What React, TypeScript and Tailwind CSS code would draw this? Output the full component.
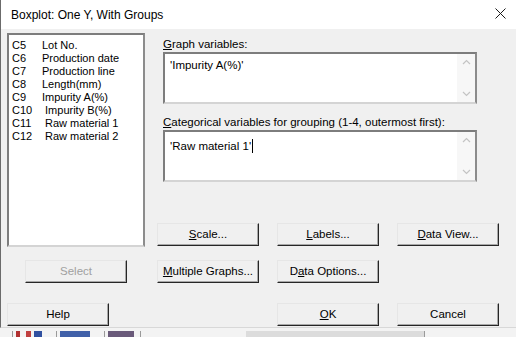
import React from "react";

const columns = [
  ["C5", "Lot No."],
  ["C6", "Production date"],
  ["C7", "Production line"],
  ["C8", "Length(mm)"],
  ["C9", "Impurity A(%)"],
  ["C10", " Impurity B(%)"],
  ["C11", " Raw material 1"],
  ["C12", " Raw material 2"],
];

function Btn({
  children,
  disabled,
  className = "",
}: {
  children: React.ReactNode;
  disabled?: boolean;
  className?: string;
}) {
  return (
    <div
      className={`flex h-[23px] w-[102px] shrink-0 items-center justify-center border border-t-[#e6e6e6] border-l-[#e6e6e6] border-r-[#262626] border-b-[#262626] bg-[#f0f0f0] text-[11.5px] shadow-[inset_-1px_-1px_0_#a8a8a8] ${
        disabled ? "text-[#a0a0a0]" : "text-black"
      } ${className}`}
    >
      {children}
    </div>
  );
}

/** Multi-line edit box with the faint inactive scroll arrows */
function EditBox({ value, caret }: { value: string; caret?: boolean }) {
  return (
    <div className="flex h-[52px] w-[314px] border-2 border-t-[#7d7d7d] border-l-[#7d7d7d] border-r-[#8c8c8c] border-b-[#d4d4d4] bg-white">
      <div className="flex-1 px-[5px] pt-[4px] text-[11.5px] leading-[14px] text-black">
        {value}
        {caret && <span className="ml-[1px] inline-block h-[14px] w-[1px] translate-y-[3px] bg-black" />}
      </div>
      <div className="flex w-[18px] flex-col items-center justify-between bg-[#f7f7f7] py-[5px]">
        <svg width="9" height="6" viewBox="0 0 9 6">
          <path d="M1 5 L4.5 1.5 L8 5" fill="none" stroke="#c4c4c4" strokeWidth="1.2" />
        </svg>
        <svg width="9" height="6" viewBox="0 0 9 6">
          <path d="M1 1 L4.5 4.5 L8 1" fill="none" stroke="#c4c4c4" strokeWidth="1.2" />
        </svg>
      </div>
    </div>
  );
}

export default function App() {
  return (
    <div className="flex h-[337px] w-[516px] flex-col overflow-hidden font-['Liberation_Sans',Arial,sans-serif] text-[11.5px]">
      {/* title bar */}
      <div className="flex h-[29px] shrink-0 items-center justify-between border-l border-[#6b6b6b] bg-white pl-[10px] pr-[10px]">
        <span className="text-[12px] text-black">Boxplot: One Y, With Groups</span>
        <svg width="11" height="11" viewBox="0 0 11 11" className="-mt-[3px]">
          <path d="M0.5 0.5 L10.5 10.5 M10.5 0.5 L0.5 10.5" stroke="#1a1a1a" strokeWidth="1" />
        </svg>
      </div>

      {/* dialog body */}
      <div className="flex h-[299px] shrink-0 flex-col border-l border-b border-[#6b6b6b] border-b-[#d8d8d8] bg-[#f0f0f0] pl-[6px] pt-[4px]">
        <div className="flex h-[214px]">
          <div className="h-[214px] w-[138px] border-2 border-t-[#7d7d7d] border-l-[#7d7d7d] border-r-[#8c8c8c] border-b-[#d4d4d4] bg-white pl-[3px] pt-[4px] text-[11px]">
            {columns.map(([c, name]) => (
              <div key={c} className="flex h-[13px] items-center whitespace-pre leading-[13px] text-black">
                <span className="w-[30px]">{c}</span>
                <span>{name}</span>
              </div>
            ))}
          </div>

          <div className="ml-[12px] flex flex-col">
            <div className="ml-[6px] mt-[3px] h-[16px] leading-[16px] text-black">
              <span className="underline">G</span>raph variables:
            </div>
            <div className="ml-[6px]">
              <EditBox value="'Impurity A(%)'" />
            </div>
            <div className="ml-[6px] mt-[10px] h-[16px] leading-[16px] text-black">
              <span className="underline">C</span>ategorical variables for grouping (1-4, outermost first):
            </div>
            <div className="ml-[6px]">
              <EditBox value="'Raw material 1'" caret />
            </div>
            <div className="mt-[41px] flex gap-[18px]">
              <Btn>
                <span className="underline">S</span>cale...
              </Btn>
              <Btn>
                <span className="underline">L</span>abels...
              </Btn>
              <Btn>
                <span className="underline">D</span>ata View...
              </Btn>
            </div>
          </div>
        </div>

        <div className="mt-[13px] flex">
          <Btn disabled className="ml-[18px]">
            Select
          </Btn>
          <Btn className="ml-[30px]">
            <span className="underline">M</span>ultiple Graphs...
          </Btn>
          <Btn className="ml-[18px]">
            D<span className="underline">a</span>ta Options...
          </Btn>
        </div>

        <div className="mt-[20px] flex">
          <Btn>Help</Btn>
          <Btn className="ml-[168px]">
            <span className="underline">O</span>K
          </Btn>
          <Btn className="ml-[18px]">Cancel</Btn>
        </div>
      </div>

      {/* window behind the dialog */}
      <div className="flex flex-1 items-end bg-[#f3f3f3]">
        <div className="flex h-[6px] w-full">
          <div className="ml-[12px] w-[1px] bg-[#9a9a9a]" />
          <div className="ml-[3px] w-[4px] bg-[#b03030]" />
          <div className="ml-[6px] w-[5px] bg-[#c04040]" />
          <div className="ml-[3px] w-[8px] bg-[#3050a0]" />
          <div className="ml-[14px] w-[1px] bg-[#9a9a9a]" />
          <div className="ml-[3px] w-[30px] bg-[#4060a8]" />
          <div className="ml-[14px] w-[1px] bg-[#9a9a9a]" />
          <div className="ml-[3px] w-[26px] bg-[#6a5a7a]" />
          <div className="ml-[6px] w-[1px] bg-[#9a9a9a]" />
          <div className="ml-[105px] w-[178px] bg-[#dcdcdc]" />
          <div className="w-[1px] bg-[#9a9a9a]" />
        </div>
      </div>
    </div>
  );
}
